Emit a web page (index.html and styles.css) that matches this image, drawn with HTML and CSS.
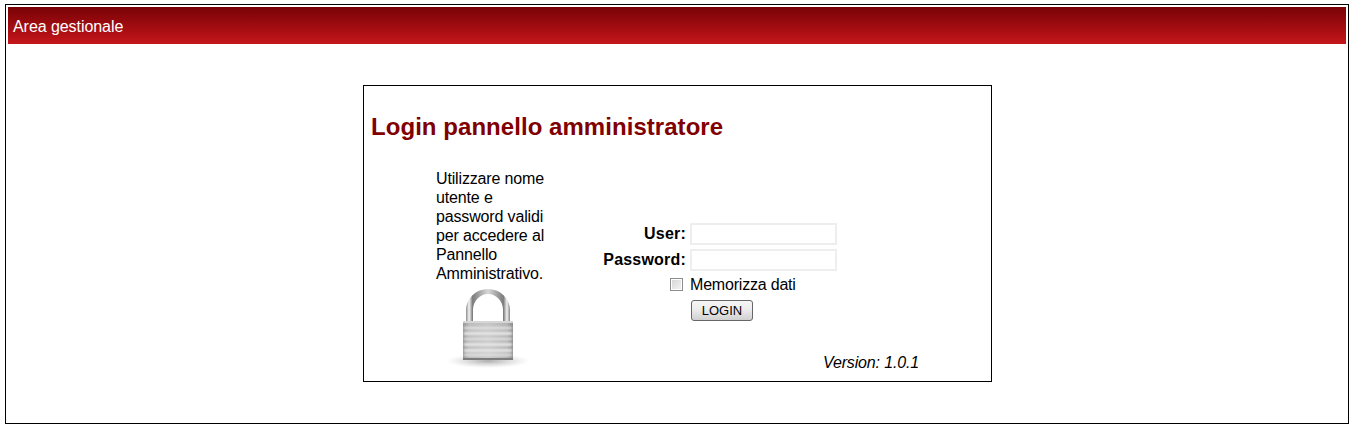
FILE: index.html
```html
<!DOCTYPE html>
<html lang="en">
<head>
  <meta charset="UTF-8" />
  <title>Area gestionale</title>
  <link rel="stylesheet" href="styles.css">
</head>
<body>
  <div class="page">
    <header class="topbar">Area gestionale</header>

    <div class="login-box">
      <h1>Login pannello amministratore</h1>

      <div class="login-body">
        <div class="info">
          <p>Utilizzare nome utente e password validi per accedere al Pannello Amministrativo.</p>
          <svg class="lock" width="94" height="84" viewBox="0 0 94 84" aria-hidden="true">
            <defs>
              <linearGradient id="shackle" x1="0" x2="1" y1="0" y2="0">
                <stop offset="0" stop-color="#8a8a8a"/>
                <stop offset="0.07" stop-color="#f6f6f6"/>
                <stop offset="0.15" stop-color="#7c7c7c"/>
                <stop offset="0.5" stop-color="#d8d8d8"/>
                <stop offset="0.85" stop-color="#7c7c7c"/>
                <stop offset="0.93" stop-color="#f2f2f2"/>
                <stop offset="1" stop-color="#858585"/>
              </linearGradient>
              <linearGradient id="bodyshade" x1="0" x2="1" y1="0" y2="0">
                <stop offset="0" stop-color="#969696"/>
                <stop offset="0.12" stop-color="#bcbcbc"/>
                <stop offset="0.5" stop-color="#c8c8c8"/>
                <stop offset="0.88" stop-color="#b4b4b4"/>
                <stop offset="1" stop-color="#8c8c8c"/>
              </linearGradient>
              <radialGradient id="floor">
                <stop offset="0" stop-color="#777" stop-opacity="0.6"/>
                <stop offset="1" stop-color="#aaa" stop-opacity="0"/>
              </radialGradient>
              <filter id="soft" x="-5%" y="-10%" width="110%" height="120%">
                <feGaussianBlur stdDeviation="0.8"/>
              </filter>
            </defs>
            <ellipse cx="48" cy="75" rx="42" ry="7" fill="url(#floor)"/>
            <path d="M26 38V24a22 21 0 0 1 44 0V38h-7V24a15 16 0 0 0-30 0V38z" fill="url(#shackle)"/>
            <rect x="23" y="35" width="50" height="39" rx="1" fill="url(#bodyshade)"/>
            <rect x="23" y="35" width="50" height="2" fill="#d6d6d6"/>
            <g fill="#e6e6e6" filter="url(#soft)">
              <rect x="24" y="41" width="48" height="2"/>
              <rect x="24" y="46" width="48" height="3"/>
              <rect x="24" y="52" width="48" height="2"/>
              <rect x="24" y="57" width="48" height="3"/>
              <rect x="24" y="63" width="48" height="3"/>
              <rect x="24" y="68" width="48" height="2"/>
            </g>
            <rect x="23" y="72" width="50" height="2" fill="#7d7d7d"/>
          </svg>
        </div>

        <form class="login-form">
          <label class="field-label" for="user">User:</label>
          <input class="field" type="text" id="user" />
          <label class="field-label" for="password">Password:</label>
          <input class="field" type="password" id="password" />
          <input class="remember-check" type="checkbox" id="remember" />
          <label class="remember-label" for="remember">Memorizza dati</label>
          <button class="login-btn" type="button">LOGIN</button>
        </form>
      </div>

      <div class="version">Version: 1.0.1</div>
    </div>
  </div>
</body>
</html>
```

FILE: styles.css
```css
* {
  box-sizing: border-box;
}

body {
  margin: 0;
  background: #fff;
  color: #000;
  font-family: "Liberation Sans", Arial, sans-serif;
  font-size: 16px;
}

.page {
  margin: 4px 1px 3px 5px;
  height: 420px;
  padding: 2px;
  border: 1px solid #000;
}

.topbar {
  height: 37px;
  padding: 10px 5px 0;
  background: linear-gradient(to bottom, #780205, #c5161b);
  color: #fff;
  font-size: 16px;
  line-height: 19px;
  letter-spacing: -0.06px;
}

.login-box {
  width: 629px;
  height: 297px;
  margin: 41px 0 0 355px;
  border: 1px solid #000;
  padding-top: 27px;
}

.login-box h1 {
  margin: 0 0 0 7px;
  color: #800000;
  font-size: 24px;
  line-height: 28px;
  letter-spacing: 0.05px;
}

.login-body {
  display: flex;
  margin-top: 28px;
}

.info {
  width: 167px;
  margin-left: 72px;
  flex: none;
}

.info p {
  width: 115px;
  margin: 0;
  line-height: 19px;
  letter-spacing: -0.15px;
}

.lock {
  display: block;
  margin: 3px 0 0 4px;
}

.login-form {
  display: grid;
  grid-template-columns: 83px 147px;
  grid-template-rows: 22px 22px 18px 24px;
  column-gap: 4px;
  row-gap: 4px;
  align-items: center;
  align-self: flex-start;
  margin-top: 54px;
}

.field-label {
  font-weight: bold;
  text-align: right;
  white-space: nowrap;
  justify-self: end;
  letter-spacing: 0.2px;
}

.field {
  width: 147px;
  height: 22px;
  padding: 1px 2px;
  border: 2px solid #eeeeee;
  background: #fff;
}

.remember-check {
  appearance: none;
  justify-self: end;
  width: 13px;
  height: 13px;
  margin: 0 3px 0 0;
  border: 1px solid #8c8c8c;
  background: linear-gradient(135deg, #d4d4d4, #f4f4f4);
  box-shadow: inset 0 0 0 1px #fff;
}

.remember-label {
  padding-top: 1px;
  white-space: nowrap;
  letter-spacing: -0.2px;
}

.login-btn {
  grid-column: 2;
  align-self: end;
  width: 62px;
  height: 21px;
  margin-left: 1px;
  padding: 0;
  border: 1px solid #666;
  border-radius: 3px;
  background: linear-gradient(to bottom, #f6f6f6 0%, #ececec 45%, #d0d0d0 100%);
  color: #000;
  font-family: "Liberation Sans", Arial, sans-serif;
  font-size: 13px;
}

.version {
  margin-top: -17px;
  margin-left: 459px;
  font-style: italic;
  line-height: 19px;
  letter-spacing: -0.15px;
}
```
